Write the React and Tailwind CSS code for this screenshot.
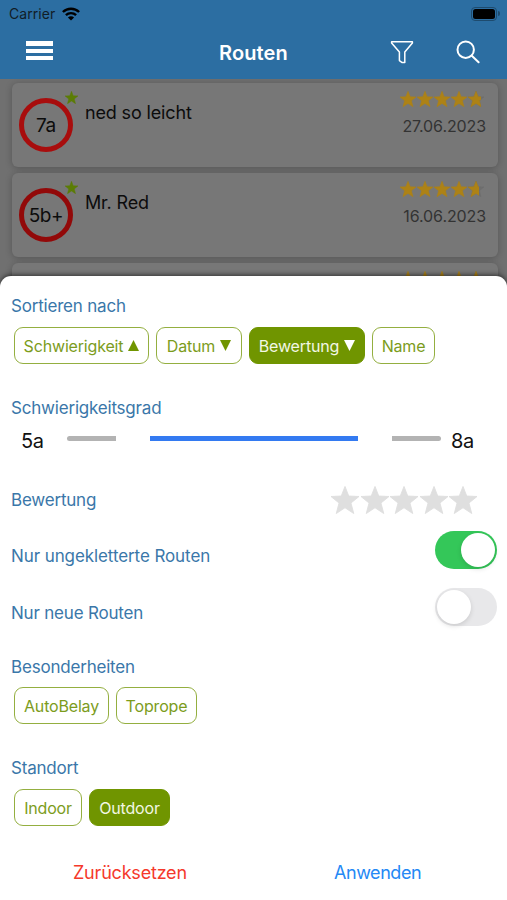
import React from "react";

const STAR = "M12 0.4 L15.2 8.6 L24 9 L17.1 14.6 L19.5 23.6 L12 18.6 L4.5 23.6 L6.9 14.6 L0 9 L8.8 8.6 Z";

function Star({ className }) {
  return (
    <svg viewBox="0 0 24 24" preserveAspectRatio="none" className={className}>
      <path d={STAR} fill="currentColor" stroke="currentColor" strokeWidth="0.8" />
    </svg>
  );
}

function Rating({ last }) {
  return (
    <div className="flex gap-[1px]">
      {[0, 1, 2, 3].map((i) => (
        <Star key={i} className="h-4 w-4 text-[#ad8216]" />
      ))}
      <div className="relative h-4 w-4">
        <Star className="h-4 w-4 text-[#6e6e6e]" />
        <div className="absolute inset-y-0 left-0 overflow-hidden" style={{ width: last }}>
          <Star className="h-4 w-4 text-[#ad8216]" />
        </div>
      </div>
    </div>
  );
}

function RouteCard({ grade, name, date, last, ring }) {
  return (
    <div className="flex h-[84px] shrink-0 items-start rounded-[6px] bg-[#777777] pl-[7px] pr-3 shadow-[0_1px_7px_rgba(0,0,0,0.24)]">
      <div className={"mt-[15px] flex h-[54px] w-[54px] items-center justify-center rounded-full border-[5px] pt-[2px] text-[19px] tracking-[-0.4px] text-[#0c0c0c] " + ring}>
        {grade}
      </div>
      <Star className="-ml-[8px] mt-[8px] h-[13px] w-[13px] text-[#5b7d05]" />
      <div className="ml-[7px] mt-[18px] text-[18px] leading-6 tracking-[-0.15px] text-[#0c0c0c]">{name}</div>
      <div className="ml-auto flex flex-col items-end">
        <div className="mr-[2px] mt-[8px]">
          <Rating last={last} />
        </div>
        <div className="mt-[9px] text-[16px] leading-5 tracking-[-0.1px] text-[#333333]">{date}</div>
      </div>
    </div>
  );
}

function Triangle({ up }) {
  return (
    <svg viewBox="0 0 12 12" className="h-[11px] w-[11px]">
      <path d={up ? "M6 0 L12 12 H0 Z" : "M0 0 H12 L6 12 Z"} fill="currentColor" />
    </svg>
  );
}

function Chip({ label, width, active, dir }) {
  return (
    <button
      className={
        "flex h-[37px] items-center justify-center gap-[5px] rounded-[9px] border-[1.5px] text-[16px] tracking-[-0.17px] whitespace-nowrap " +
        width +
        (active ? " border-[#709500] bg-[#709500] text-[#f2f7e4]" : " border-[#94af40] bg-white text-[#7c9c1c]")
      }
    >
      <span>{label}</span>
      {dir && (
        <span className={active ? "text-white" : "text-[#709500]"}>
          <Triangle up={dir === "up"} />
        </span>
      )}
    </button>
  );
}

function Label({ children }) {
  return <div className="text-[17px] leading-5 tracking-[-0.2px] text-[#3a77a9]">{children}</div>;
}

function Toggle({ on }) {
  return (
    <div className={"flex h-[38px] w-[62px] items-center rounded-full px-[2px] " + (on ? "justify-end bg-[#34c759]" : "justify-start bg-[#e8e8ea]")}>
      <div className="h-[34px] w-[34px] rounded-full bg-white shadow-[0_2px_5px_rgba(0,0,0,0.13)]" />
    </div>
  );
}

export default function App() {
  return (
    <div className="relative flex h-[900px] w-full flex-col overflow-hidden bg-[#707070] font-['Inter','Liberation_Sans',sans-serif]">
      <header className="z-10 flex h-[79px] shrink-0 flex-col bg-[#2c6ea2]">
        <div className="flex h-[27px] items-center pl-[9px] pr-[7px] text-[#111d27]">
          <span className="text-[14px] tracking-[0.05px]">Carrier</span>
          <svg viewBox="0 0 18 14" className="ml-[7px] h-[14px] w-[18px] text-black">
            <g fill="none" stroke="currentColor" strokeWidth="2.4">
              <path d="M0.9 5 A11.6 11.6 0 0 1 17.1 5" />
              <path d="M3.9 8.2 A7.3 7.3 0 0 1 14.1 8.2" />
            </g>
            <path d="M9 13.6 L5.9 10.5 A4.4 4.4 0 0 1 12.1 10.5 Z" fill="currentColor" />
          </svg>
          <div className="ml-auto flex items-center gap-[1px]">
            <div className="flex h-[14px] w-[26px] items-center justify-center rounded-[4px] border border-[#1e4b6e]">
              <div className="h-[10px] w-[22px] rounded-[2.5px] bg-black" />
            </div>
            <div className="h-[5px] w-[2px] rounded-r-full bg-[#1e4b6e]" />
          </div>
        </div>
        <div className="flex h-[50px] items-center pl-[26px] pr-[27px] text-white">
          <div className="mb-[4px] flex w-[27px] flex-col gap-[3px]">
            <div className="h-[5px] bg-white" />
            <div className="h-[4px] bg-white" />
            <div className="h-[4px] bg-white" />
          </div>
          <h1 className="ml-[166px] w-[70px] whitespace-nowrap pt-[1px] text-[20px] font-semibold tracking-[0.1px]">Routen</h1>
          <svg viewBox="0 0 24 24" className="ml-auto h-6 w-6" fill="none" stroke="currentColor" strokeWidth="1.5" strokeLinejoin="round">
            <path d="M1.6 1.8 H22.4 V3 L14.8 12 V22.6 H12.2 L9.4 20.6 V12 L1.6 3 Z" />
          </svg>
          <svg viewBox="0 0 24 24" className="ml-[42px] h-6 w-6" fill="none" stroke="currentColor" strokeWidth="2" strokeLinecap="round">
            <circle cx="9.7" cy="9.7" r="8.2" />
            <path d="M15.8 15.8 L22.6 22.2" />
          </svg>
        </div>
      </header>

      <main className="flex flex-col gap-[6px] pl-3 pr-[9px] pt-1">
        <RouteCard grade="7a" name="ned so leicht" date="27.06.2023" last="79%" ring="border-[#a80d0d]" />
        <RouteCard grade="5b+" name="Mr. Red" date="16.06.2023" last="66%" ring="border-[#920909]" />
        <div className="flex h-[84px] justify-end rounded-[6px] bg-[#777777] pr-[14px] pt-[8px] shadow-[0_1px_7px_rgba(0,0,0,0.24)]">
          <Rating last="62%" />
        </div>
      </main>

      <section className="absolute inset-x-0 bottom-0 z-20 flex h-[624px] flex-col rounded-t-[11px] bg-white pl-[11px] pr-[10px] shadow-[0_-1px_5px_rgba(0,0,0,0.6)]">
        <div className="mt-[20px]">
          <Label>Sortieren nach</Label>
        </div>
        <div className="ml-[3px] mt-[11px] flex gap-[7px]">
          <Chip label="Schwierigkeit" dir="up" width="w-[135px]" />
          <Chip label="Datum" dir="down" width="w-[86px]" />
          <Chip label="Bewertung" dir="down" width="w-[116px]" active />
          <Chip label="Name" width="w-[63px]" />
        </div>

        <div className="mt-[34px]">
          <Label>Schwierigkeitsgrad</Label>
        </div>
        <div className="mt-[9px] flex h-[28px] items-center pl-[10px] text-[20px] tracking-[-0.3px] text-[#111]">
          <span className="w-[46px]">5a</span>
          <div className="mb-[5px] h-[5px] w-[49px] rounded-l-full bg-[#b3b3b3]" />
          <div className="mb-[5px] ml-[34px] h-[5px] w-[208px] bg-[#337af1]" />
          <div className="mb-[5px] ml-[34px] h-[5px] w-[49px] rounded-r-full bg-[#b3b3b3]" />
          <span className="ml-[10px]">8a</span>
        </div>

        <div className="mt-[28px] flex h-[34px] items-center justify-between">
          <Label>Bewertung</Label>
          <div className="mr-[20px] flex gap-[1.5px]">
            {[0, 1, 2, 3, 4].map((i) => (
              <Star key={i} className="h-[28px] w-[28px] text-[#dfdfdf]" />
            ))}
          </div>
        </div>
        <div className="mt-[14px] flex h-[38px] justify-between">
          <div className="mt-[15px]">
            <Label>
              <span className="tracking-[-0.09px]">Nur ungekletterte Routen</span>
            </Label>
          </div>
          <Toggle on />
        </div>
        <div className="mt-[19px] flex h-[38px] justify-between">
          <div className="mt-[15px]">
            <Label>Nur neue Routen</Label>
          </div>
          <Toggle />
        </div>

        <div className="mt-[31px]">
          <Label>Besonderheiten</Label>
        </div>
        <div className="ml-[3px] mt-[10px] flex gap-[7px]">
          <Chip label="AutoBelay" width="w-[95px]" />
          <Chip label="Toprope" width="w-[81px]" />
        </div>
        <div className="mt-[34px]">
          <Label>Standort</Label>
        </div>
        <div className="ml-[3px] mt-[11px] flex gap-[7px]">
          <Chip label="Indoor" width="w-[68px]" />
          <Chip label="Outdoor" width="w-[81px]" active />
        </div>

        <div className="mt-[35px] flex text-[18px] leading-6 tracking-[-0.2px]">
          <button className="ml-[62px] w-[114px] whitespace-nowrap text-left text-[#f5392b]">Zurücksetzen</button>
          <button className="ml-[147px] whitespace-nowrap text-left tracking-[-0.45px] text-[#2488f5]">Anwenden</button>
        </div>
      </section>
    </div>
  );
}
